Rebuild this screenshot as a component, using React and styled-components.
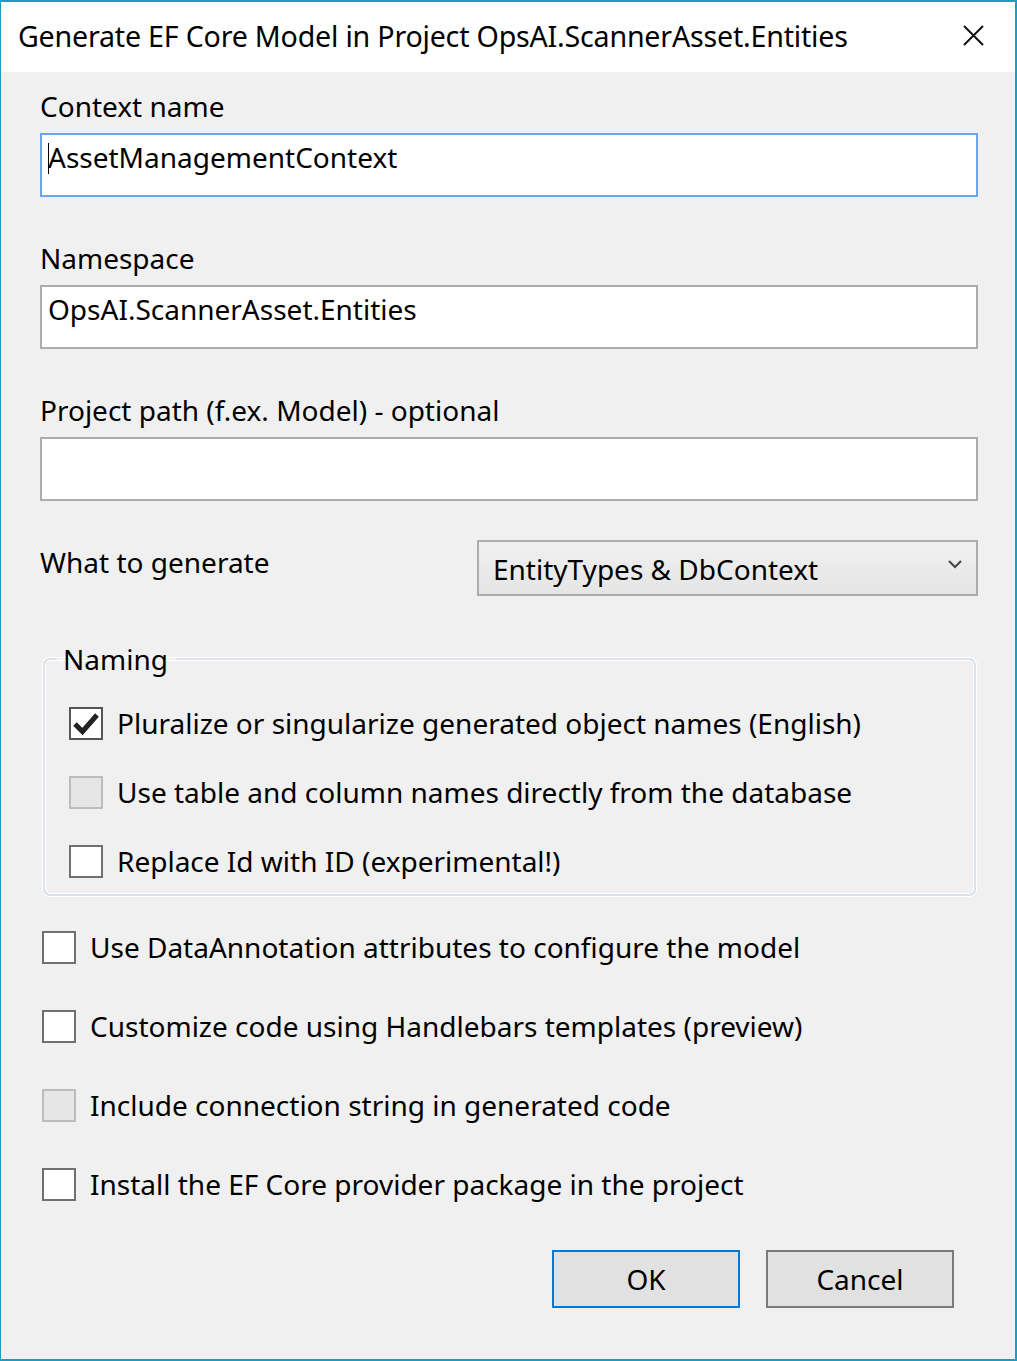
import React from 'react';
import styled, { createGlobalStyle } from 'styled-components';

const GlobalStyle = createGlobalStyle`
  html, body {
    margin: 0;
    padding: 0;
    background: #f0f0f0;
  }
  body {
    font-family: "Noto Sans", "Open Sans", sans-serif;
    color: #000;
  }
`;

// Window chrome

const Window = styled.div`
  width: 1017px;
  height: 1361px;
  box-sizing: border-box;
  border: 2px solid #1c9cc0;
  border-left-width: 1px;
  background: #f0f0f0;
  display: flex;
  flex-direction: column;
`;

const TitleBar = styled.div`
  height: 70px;
  background: #fff;
  display: flex;
  align-items: center;
  justify-content: space-between;
  padding: 0 31px 0 17px;
  flex-shrink: 0;
`;

const Title = styled.div`
  font-size: 28.6px;
  letter-spacing: -0.2px;
  margin-top: -3px;
`;

const CloseIcon = styled.svg`
  width: 21px;
  height: 21px;
  margin-top: -4px;
`;

const Content = styled.div`
  flex: 1;
  padding: 17px 37px 0 39px;
  display: flex;
  flex-direction: column;
`;

// Fields

const Label = styled.div`
  font-size: 28px;
  line-height: 34px;
  height: 34px;
  margin-bottom: 10px;
`;

const TextBox = styled.div`
  height: 64px;
  box-sizing: border-box;
  border: 2px solid ${(p) => (p.focused ? '#6ba7e8' : '#acacac')};
  background: #fff;
  font-size: 28px;
  line-height: 34px;
  padding: 5px 6px 0 6px;
  margin-bottom: 44px;
  display: flex;
`;

const Caret = styled.span`
  display: inline-block;
  width: 1px;
  height: 31px;
  background: #000;
  margin-top: 3px;
  margin-right: -1px;
`;

const GenerateRow = styled.div`
  display: flex;
  align-items: flex-start;
  justify-content: space-between;
  height: 56px;
  margin-top: -5px;
`;

const GenerateLabel = styled(Label)`
  margin-top: 5px;
`;

const Dropdown = styled.div`
  width: 501px;
  flex-shrink: 0;
  height: 56px;
  box-sizing: border-box;
  border: 2px solid #acacac;
  background: linear-gradient(#f0f0f0, #e5e5e5);
  display: flex;
  align-items: center;
  justify-content: space-between;
  padding: 0 14px 0 14px;
  font-size: 28px;
`;

const DropText = styled.span`
  margin-top: 2px;
`;

const Chevron = styled.svg`
  width: 14px;
  height: 10px;
  margin-top: -8px;
`;

// Group box

const Group = styled.fieldset`
  margin: 46px 2px 0 3px;
  padding: 13px 0 1px 24px;
  border: 2px solid #dce2e7;
  border-radius: 7px;
  box-shadow: 0 0 0 1px #fff, inset 0 0 0 1px #fff;
  height: 254px;
  box-sizing: border-box;
  display: flex;
  flex-direction: column;
`;

const Legend = styled.legend`
  font-size: 28px;
  padding: 0 8px 0 6px;
  margin-left: -12px;
  line-height: 34px;
`;

const CheckRow = styled.div`
  display: flex;
  align-items: center;
  height: ${(p) => p.h || 69}px;
  font-size: 28px;
`;

const Box = styled.span`
  width: 34px;
  height: 33px;
  box-sizing: border-box;
  border: 2px solid ${(p) => (p.disabled ? '#bcbcbc' : p.checked ? '#555' : '#707070')};
  background: ${(p) => (p.disabled ? '#e6e6e6' : '#fff')};
  display: flex;
  align-items: center;
  justify-content: center;
  margin-right: 14px;
  flex-shrink: 0;
`;

const CheckText = styled.span`
  margin-top: -2px;
`;

const Options = styled.div`
  display: flex;
  flex-direction: column;
  margin-top: 12px;
  margin-left: 2px;
`;

const Buttons = styled.div`
  display: flex;
  justify-content: flex-end;
  gap: 26px;
  margin-top: 26px;
  margin-right: 24px;
`;

const Button = styled.div`
  width: 188px;
  height: 58px;
  box-sizing: border-box;
  border: 2px solid ${(p) => (p.primary ? '#0078d7' : '#7a7a7a')};
  background: #e1e1e1;
  display: flex;
  align-items: center;
  justify-content: center;
  font-size: 28px;
`;

function CheckBox({ checked, disabled }) {
  return (
    <Box checked={checked} disabled={disabled}>
      {checked ? (
        <svg width="26" height="24" viewBox="0 0 26 24">
          <path d="M2 12 L9.5 19.5 L24 3" fill="none" stroke="#222" strokeWidth="5" />
        </svg>
      ) : null}
    </Box>
  );
}

function Option({ label, checked, disabled, h }) {
  return (
    <CheckRow h={h}>
      <CheckBox checked={checked} disabled={disabled} />
      <CheckText>{label}</CheckText>
    </CheckRow>
  );
}

export default function App() {
  return (
    <Window>
      <GlobalStyle />
      <TitleBar>
        <Title>Generate EF Core Model in Project OpsAI.ScannerAsset.Entities</Title>
        <CloseIcon viewBox="0 0 21 21">
          <path d="M1 1 L20 20 M20 1 L1 20" stroke="#111" strokeWidth="2" />
        </CloseIcon>
      </TitleBar>
      <Content>
        <Label>Context name</Label>
        <TextBox focused>
          <Caret />
          AssetManagementContext
        </TextBox>

        <Label>Namespace</Label>
        <TextBox>OpsAI.ScannerAsset.Entities</TextBox>

        <Label>Project path (f.ex. Model) - optional</Label>
        <TextBox />

        <GenerateRow>
          <GenerateLabel>What to generate</GenerateLabel>
          <Dropdown>
            <DropText>EntityTypes &amp; DbContext</DropText>
            <Chevron viewBox="0 0 14 10">
              <path d="M1 2 L7 8 L13 2" fill="none" stroke="#444" strokeWidth="2" />
            </Chevron>
          </Dropdown>
        </GenerateRow>

        <Group>
          <Legend>Naming</Legend>
          <Option label="Pluralize or singularize generated object names (English)" checked />
          <Option label="Use table and column names directly from the database" disabled />
          <Option label="Replace Id with ID (experimental!)" />
        </Group>

        <Options>
          <Option label="Use DataAnnotation attributes to configure the model" h={79} />
          <Option label="Customize code using Handlebars templates (preview)" h={79} />
          <Option label="Include connection string in generated code" disabled h={79} />
          <Option label="Install the EF Core provider package in the project" h={79} />
        </Options>

        <Buttons>
          <Button primary>OK</Button>
          <Button>Cancel</Button>
        </Buttons>
      </Content>
    </Window>
  );
}
